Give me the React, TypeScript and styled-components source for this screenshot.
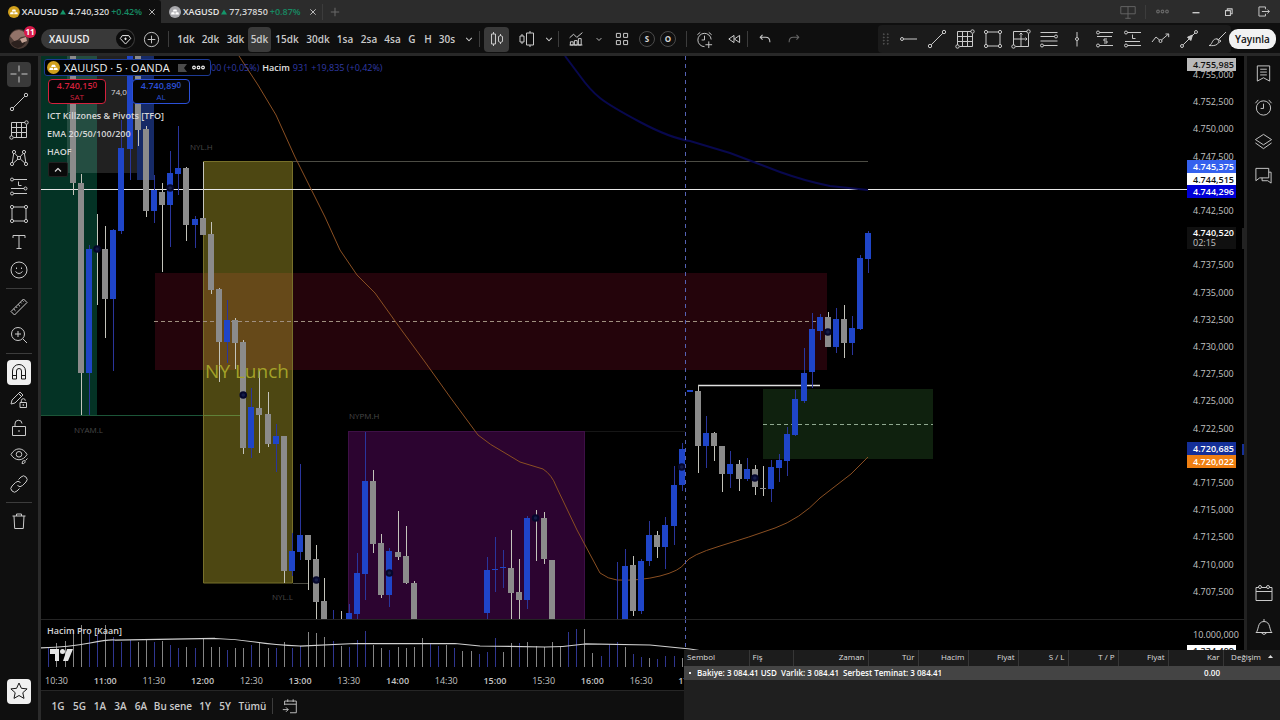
import React from "react";
import styled, { createGlobalStyle, css } from "styled-components";

const GlobalStyle = createGlobalStyle`
  * { box-sizing: border-box; }
  html, body { margin: 0; background: #000; }
  body { font-family: "Open Sans", "Noto Sans", sans-serif; color: #d6d6d6; font-size: 10px; overflow: hidden; }
  button { font: inherit; color: inherit; background: none; border: 0; padding: 0; margin: 0; cursor: pointer; }
`;

/* ---------- layout ---------- */

const Page = styled.div`
  position: relative;
  display: flex;
  flex-direction: column;
  height: 100vh;
  background: #0f0f0f;
`;

const TabBar = styled.header`
  display: flex;
  align-items: center;
  height: 23px;
  background: #2c2c2c;
`;

const Tab = styled.div<{ $active?: boolean }>`
  display: flex;
  align-items: center;
  gap: 2px;
  width: 161px;
  height: 100%;
  padding: 0 3px 0 8px;
  white-space: nowrap;
  background: ${(p) => (p.$active ? "#0f0f0f" : "transparent")};
  border-radius: 0 3px 0 0;
`;

const TabName = styled.span`
  font-size: 9px;
  font-weight: 600;
  color: #e4e4e4;
`;

const TabPrice = styled.span`
  font-size: 9px;
  font-weight: 600;
`;

const TabChange = styled.span`
  font-size: 9px;
  font-weight: 600;
  color: #178a63;
`;

const Spacer = styled.div<{ $w?: number }>`
  flex: ${(p) => (p.$w ? `0 0 ${p.$w}px` : "1")};
`;

const Rule = styled.span<{ $h?: number }>`
  flex: none;
  width: 1px;
  height: ${(p) => p.$h ?? 16}px;
  background: #3c3c3c;
`;

const Toolbar = styled.div`
  display: flex;
  align-items: center;
  height: 33px;
  border-bottom: 3px solid #282828;
  background: #0f0f0f;
  padding-top: 2px;
`;

const Slot = styled.button<{ $w?: number; $h?: number; $on?: boolean; $light?: boolean; $dim?: boolean }>`
  display: flex;
  flex: none;
  align-items: center;
  justify-content: center;
  width: ${(p) => p.$w ?? 28}px;
  height: ${(p) => p.$h ?? 25}px;
  border-radius: 4px;
  font-weight: 600;
  white-space: nowrap;
  color: ${(p) => (p.$light ? "#161616" : p.$dim ? "#686868" : "#cacaca")};
  ${(p) => p.$on && css`background: #3a3a3a;`}
  ${(p) => p.$light && css`background: #f0f0f0;`}
`;

const Account = styled.button`
  position: relative;
  display: flex;
  align-items: center;
  width: 41px;
  height: 24px;
  padding-left: 9px;
`;

const Badge = styled.span`
  position: absolute;
  left: 24px;
  top: -1px;
  width: 12px;
  height: 12px;
  border-radius: 6px;
  background: #d81b4a;
  color: #fff;
  font-size: 8px;
  line-height: 12px;
  font-weight: 700;
  text-align: center;
`;

const SymbolButton = styled.button`
  display: flex;
  align-items: center;
  justify-content: space-between;
  width: 94px;
  height: 20px;
  padding: 0 1px 0 8px;
  border-radius: 10px;
  background: #393939;
  font-weight: 600;
  color: #eee;
`;

const RoundIcon = styled.span`
  display: flex;
  align-items: center;
  justify-content: center;
  width: 18px;
  height: 18px;
  border-radius: 9px;
  background: #0c0c0c;
`;

const Letter = styled.button`
  width: 16px;
  height: 16px;
  margin-right: 5px;
  border: 1px solid #4a4a4a;
  border-radius: 8px;
  font-size: 8px;
  line-height: 12px;
  font-weight: 700;
`;

const Favorites = styled.div`
  display: flex;
  align-items: center;
  height: 28px;
  background: #1b1b1b;
  border-radius: 4px;
`;

const Publish = styled.button`
  width: 47px;
  height: 20px;
  margin: 0 4px 0 -2px;
  border-radius: 9px;
  background: #f2f2f2;
  color: #111;
  font-weight: 600;
`;

const Body = styled.div`
  display: flex;
  flex: 1;
  min-height: 0;
`;

const LeftRail = styled.nav`
  display: flex;
  flex: none;
  flex-direction: column;
  align-items: center;
  width: 41px;
  padding: 4px 0 15px;
  border-right: 3px solid #2b2b2b;
`;

const RailCell = styled.div`
  display: flex;
  flex: none;
  align-items: center;
  justify-content: center;
  height: 28px;
`;

const RailRule = styled.hr`
  flex: none;
  width: 26px;
  height: 1px;
  margin: 4px 0;
  border: 0;
  background: #3c3c3c;
`;

const RightRail = styled.nav`
  display: flex;
  flex: none;
  flex-direction: column;
  align-items: center;
  width: 36px;
  padding-bottom: 42px;
  border-left: 3px solid #222;
`;

const ChartColumn = styled.main`
  display: flex;
  flex: 1;
  flex-direction: column;
  min-width: 0;
  background: #000;
`;

const Pane = styled.section<{ $h?: number }>`
  position: relative;
  display: flex;
  min-height: 0;
  flex: ${(p) => (p.$h ? `0 0 ${p.$h}px` : "1")};
  overflow: hidden;
`;

const Plot = styled.svg`
  display: block;
  flex: 1;
  min-width: 0;
  height: 100%;
`;

const Scale = styled.svg`
  display: block;
  flex: none;
  width: 57px;
  height: 100%;
`;

const RangeBar = styled.footer`
  display: flex;
  flex: none;
  align-items: center;
  height: 30px;
  padding-left: 6px;
  border-top: 1px solid #262626;
  background: #0f0f0f;
`;

/* ---------- legend ---------- */

const Legend = styled.div`
  position: absolute;
  left: 3px;
  top: 3px;
  display: flex;
  flex-direction: column;
  align-items: flex-start;
`;

const LegendRow = styled.div`
  display: flex;
  align-items: center;
`;

const LegendTitle = styled.div`
  display: flex;
  align-items: center;
  gap: 4px;
  width: 167px;
  height: 17px;
  padding: 0 4px 0 2px;
  border: 1px solid #1d3a94;
  border-radius: 3px;
  background: #020202;
  font-size: 11px;
  line-height: 15px;
  font-weight: 500;
  color: #f0f0f0;
  white-space: nowrap;
`;

const TitleText = styled.span`
  flex: 1;
`;

const Values = styled.span<{ $strong?: boolean }>`
  margin-right: 3px;
  font-size: 9px;
  font-weight: ${(p) => (p.$strong ? 600 : 400)};
  color: ${(p) => (p.$strong ? "#e2e2e2" : "#303ba6")};
  white-space: nowrap;
`;

const Quotes = styled.div`
  display: flex;
  align-items: center;
  padding: 3px 0 0 4px;
`;

const QuoteButton = styled.button<{ $tone: string }>`
  display: flex;
  flex-direction: column;
  align-items: center;
  width: 58px;
  height: 25px;
  border: 1px solid ${(p) => p.$tone};
  border-radius: 4px;
  background: #050505;
  color: ${(p) => p.$tone};
  font-size: 8px;
  line-height: 10px;
`;

const QuotePrice = styled.span`
  font-size: 9px;
  line-height: 12px;
  font-weight: 600;
`;

const Small = styled.span`
  font-size: 8px;
  line-height: 8px;
  vertical-align: 1px;
`;

const Spread = styled.span`
  width: 26px;
  font-size: 8px;
  text-align: center;
  color: #ddd;
`;

const Indicators = styled.ul`
  list-style: none;
  margin: 3px 0 0;
  padding: 0 0 0 3px;
  font-size: 9px;
  font-weight: 600;
  line-height: 18px;
`;

const Collapse = styled.button`
  display: flex;
  align-items: center;
  justify-content: center;
  width: 20px;
  height: 15px;
  margin: 1px 0 0 4px;
  border: 1px solid #222;
  border-radius: 2px;
  background: #0a0a0a;
`;

const PaneTitle = styled.span`
  position: absolute;
  left: 6px;
  top: 6px;
  font-size: 9px;
  line-height: 12px;
  font-weight: 600;
`;

const Brand = styled.svg`
  position: absolute;
  left: 9px;
  top: 30px;
`;

/* ---------- terminal window over the chart ---------- */

const Terminal = styled.section`
  position: absolute;
  left: 684px;
  right: 0;
  bottom: 0;
  height: 70px;
  background: #1f1f1f;
`;

const TradeTable = styled.table`
  width: 100%;
  table-layout: fixed;
  border-collapse: collapse;
  font-size: 8px;
  white-space: nowrap;
  color: #dedede;
`;

const Head = styled.th<{ $left?: boolean }>`
  height: 16px;
  padding: 0 3px 2px;
  border-right: 1px solid #363636;
  background: #1c1c1c;
  font-weight: 400;
  line-height: 14px;
  text-align: ${(p) => (p.$left ? "left" : "right")};
  &:last-child { border-right: 0; padding-right: 7px; }
`;

const SortMark = styled.svg`
  margin: 0 0 2px 7px;
`;

const Cell = styled.td<{ $right?: boolean }>`
  height: 14px;
  padding: 0 3px 0 4px;
  background: #444;
  line-height: 14px;
  font-weight: 600;
  color: #fff;
  text-align: ${(p) => (p.$right ? "right" : "left")};
`;

const Figure = styled.span`
  margin-right: 4px;
`;

const Bullet = styled.span`
  display: inline-block;
  width: 2px;
  height: 2px;
  margin: 0 6px 2px 1px;
  background: #eee;
`;

/* ---------- icons ---------- */

type Mark = { d?: string; c?: [number, number, number][]; f?: string };

const Icon = ({ m, size = 20, w = 1 }: { m: Mark; size?: number; w?: number }) => (
  <svg width={size} height={size} viewBox="0 0 20 20" fill="none" stroke="currentColor" strokeWidth={w} strokeLinejoin="round" aria-hidden="true">
    {m.d && <path d={m.d} />}
    {m.f && <path d={m.f} fill="currentColor" />}
    {m.c?.map(([x, y, r], i) => <circle key={i} cx={x} cy={y} r={r} />)}
  </svg>
);

const I: Record<string, Mark> = {
  cross: { d: "M10 1.500v6M10 12.500v6M1.500 10h6M12.500 10h6" },
  trend: { d: "M4.200 15.800 15.800 4.200", c: [[3, 17, 1.700], [17, 3, 1.700]] },
  grid: { d: "M2.500 16V2.500H16M17.500 4.500v13H4.500M2.500 7.500h15M2.500 12.500h15M7.500 2.500v15M12.500 2.500v15", c: [[2.500, 17.500, 1.700], [17.500, 2.500, 1.700]] },
  pattern: { d: "M3.300 14.500 4.700 5.500M6 5.500l3 3.500M11 9l3-3.500M15.400 5.500l1.400 9M4.500 15l4.500-4M11.300 11l4.500 4", c: [[5, 4, 1.600], [15, 4, 1.600], [10, 10, 1.600], [3, 16, 1.600], [17, 16, 1.600]] },
  longPos: { d: "M4.500 3.500H18M9.500 5.500v4h3M2 12.500h13M4.500 17.500H18", c: [[3, 3.500, 1.500], [16.500, 12.500, 1.500], [3, 17.500, 1.500]] },
  shortFav: { d: "M4.500 3.500H18M2 7.500h15M12 10H9v2h3v2H9M4.500 16.500H18", c: [[3, 3.500, 1.500], [3, 16.500, 1.500]] },
  longFav: { d: "M4.500 3.500H18M9.500 5.500v4h3M2 12.500h15M4.500 16.500H18", c: [[3, 3.500, 1.500], [3, 16.500, 1.500]] },
  rect: { d: "M4.500 3h11M4.500 17h11M3 4.500v11M17 4.500v11", c: [[3, 3, 1.600], [17, 3, 1.600], [3, 17, 1.600], [17, 17, 1.600]] },
  text: { d: "M4 6V3.500h12V6M10 3.500v13M7.500 16.500h5" },
  smile: { d: "M6.500 11.500q3.500 4 7 0M7.500 7.500v1.500M12.500 7.500v1.500", c: [[10, 10, 8]] },
  ruler: { d: "M2 14.500 14.500 2 18 5.500 5.500 18ZM4.700 12l1.800 1.800M7 9.700l1.200 1.200M9.200 7.500 11 9.300M11.500 5.200l1.200 1.200M13.300 3.400l1.200 1.200" },
  zoom: { d: "M9 6v6M6 9h6M14 14l4 4", c: [[9, 9, 6.500]] },
  magnet: { d: "M3.500 17V9a6.500 6.500 0 0 1 13 0v8h-4V9a2.500 2.500 0 0 0-5 0v8ZM3.500 13.500h4M12.500 13.500h4" },
  penLock: { d: "M2 14 3 10 11 2l3 3-8 8ZM9.500 3.500l3 3M11 12.500h6.500v5H11ZM12.300 12.500v-1.800a2 2 0 0 1 4 0", c: [[14.300, 15, .5]] },
  lock: { d: "M3.500 8.500h13v9h-13ZM6 8.500V6a3.500 3.500 0 0 1 7-.5M10 12v2" },
  eye: { d: "M2 8.500c4-7.500 12-7.500 16 0-4 7-12 7-16 0ZM13 17.500q0-3 2.500-3 1.500 1.500 0 2.500-1 1-2.500.5ZM16.500 14.500 18.500 12.500", c: [[10, 8.300, 2.800]] },
  link: { d: "M8.500 11.500a3.500 3.500 0 0 0 5 0l3.500-3.500a3.500 3.500 0 0 0-5-5L9.500 5.500M11.500 8.500a3.500 3.500 0 0 0-5 0L3 12a3.500 3.500 0 0 0 5 5l2.500-2.500" },
  trash: { d: "M3.500 5h13M7.500 5V3h5v2M5 5l.7 12.500h8.600L15 5" },
  star: { d: "m10 2 2.400 5.300 5.700.6-4.300 3.800 1.200 5.700L10 14.500l-5 2.900 1.200-5.700L1.900 7.900l5.700-.6Z" },
  hline: { d: "M4.500 10H18", c: [[3, 10, 1.500]] },
  vline: { d: "M10 3v5.500M10 11.500v6", c: [[10, 10, 1.500]] },
  gridArrow: { d: "M2.500 16V2.500H16M17.500 4.500v13H4.500M10 4v13M3 10h13M8.500 5.500 10 4l1.500 1.500M14.500 8.500 16 10l-1.500 1.500", c: [[2.500, 17.500, 1.700], [17.500, 2.500, 1.700]] },
  lines: { d: "M1.500 3.500h17M1.500 7.500h14M1.500 12h17M4.500 16.500h14", c: [[17, 7.500, 1.500], [3, 16.500, 1.500]] },
  zigzag: { d: "M1 13l4-5 3.500 3M10.500 11l7-6M14.500 5h3.200v3.200", c: [[9.500, 12, 1.500]] },
  arrow: { d: "M4.200 15.800 10 10M13 7l3-3", f: "M13.500 6 11.800 11.500 8.500 8.200Z", c: [[3, 17, 1.500], [17, 3, 1.500]] },
  brush: { d: "M2 16.500c3 0 3-6 6.500-6.500 3-.3 4 3 2 5-2 1.800-5 1.800-8.500 1.500ZM9.500 9.500 14 12l-2 1.500M12 10l7-7" },
  candles: { d: "M6.500 3v2M6.500 15v2M13.500 5v2M13.500 13v2M4.500 5h4v10h-4ZM11.500 7.500l2-1 2 1v5l-2 1-2-1Z" },
  bars: { d: "M5 5v2M5 13v2M3 7h4v6H3ZM13 2v2M13 16v2M9.500 4h7v12h-7Z" },
  indicator: { d: "M2 8.500 7 4l4 4 7-6M3 17.500v-4h3.500v4ZM8 17.500V12h3.500v5.500ZM13 17.500V9.500h3.500v8ZM2 17.500h16" },
  four: { d: "M3 3h5v5H3ZM12 3h5v5h-5ZM3 12h5v5H3ZM12 12h5v5h-5Z" },
  alarmPlus: { d: "M10 6v4.500H7M17 10A7 7 0 1 0 10 17.500M2.500 5 5.500 2.500M14.500 2.500l3 2.500M14.500 12v7M11 15.500h7" },
  rewind: { d: "M10 5.500v9L3.500 10ZM17 5.500v9L10.500 10Z" },
  undo: { d: "M6.500 4 3 7.500 6.500 11M3 7.500h8q6 0 6 7" },
  redo: { d: "M13.500 4 17 7.500 13.500 11M17 7.500H9q-6 0-6 7" },
  chevron: { d: "m6 8.500 4 4 4-4" },
  up: { d: "m5 12.500 5-5 5 5" },
  plusCircle: { d: "M10 6v8M6 10h8", c: [[10, 10, 7.500]] },
  gem: { d: "M5 4h10l3 4.500-8 8.500-8-8.500ZM10 7v4M8 9h4" },
  list: { d: "M3.500 2h13v16L10 14.500 3.500 18ZM6.500 5.500h7M6.500 8.500h7M6.500 11.500h7" },
  alarm: { d: "M10 6v5H7M1.500 5.500l3-3.500M15.500 2l3 3.500", c: [[10, 10.500, 7.500]] },
  layers: { d: "M1.500 8 10 2.500 18.500 8 10 13.500ZM1.500 11.500 10 17.500l8.500-6" },
  chat: { d: "M2 2.500h13.500v10H6L2 15.500ZM15.500 6.500h2.500V18l-3.500-2.500H8.500v-3" },
  calendar: { d: "M2 4.500h2.500M7.500 4.500h5M15.500 4.500H18V17.500H2V4.500M2 8.500h16", c: [[6, 4, 1.500], [14, 4, 1.500]] },
  bell: { d: "M2 15.500c3-2 1-11 8-11s5 9 8 11ZM10 4.500V2M7.500 16q2.500 3 5 0" },
  goto: { d: "M4 9V4.500h13v13H10M4 8h13M7.500 2.500v3M13.500 2.500v3M2 14h6M5.500 11.500 8 14l-2.500 2.500" },
  close: { d: "m5.500 5.500 9 9M14.500 5.500l-9 9" },
  plus: { d: "M10 4v12M4 10h12" },
  monitor: { d: "M2 4h16v8H2ZM10 4v13M7 17h6" },
  dots: { c: [[4, 10, 1.800], [10, 10, 1.800], [16, 10, 1.800]] },
  minus: { d: "M5 11h10" },
  restore: { d: "M5 8h7v7H5ZM7.500 8V5.500h7v7H12" },
  exit: { d: "M13 6.500V3H3v14h10v-3.500M7.500 10H19M16 7l3 3-3 3" },
  grip: { c: [[6, 4, .6], [11, 4, .6], [6, 8, .6], [11, 8, .6], [6, 12, .6], [11, 12, .6], [6, 16, .6], [11, 16, .6]] },
};

const Coin = ({ color, size = 12 }: { color: string; size?: number }) => (
  <svg width={size} height={size} viewBox="0 0 12 12" aria-hidden="true">
    <circle cx="6" cy="6" r="6" fill={color} />
    <path d="M4.600 3.500h2.800l.8 2H3.800ZM2.600 6.200h2.800l.5 2.200H2ZM6.600 6.200h2.800l.6 2.200H6.200Z" fill="#fff" />
  </svg>
);

const Rise = () => (
  <svg width="6" height="6" viewBox="0 0 7 6" aria-hidden="true"><path d="M3.500 0 7 6H0Z" fill="#14976b" /></svg>
);

/* ---------- chart data ---------- */

const FIRST = 105.2;
const STEP = 8.12;
const xAt = (k: number) => FIRST + STEP * k;

// slot, high, body top, body bottom, low, direction
type Candle = [number, number, number, number, number, 0 | 1];
const candles: Candle[] = [
  [-4, 50, 50, 183, 195, 0], [-3, 174, 183, 373, 415, 0], [-2, 245, 249, 373, 415, 1], [-1, 214, 249, 250, 305, 0],
  [0, 226, 249, 299, 338, 0], [1, 229, 230, 299, 371, 1], [2, 120, 148, 231, 234, 1], [3, 50, 50, 149, 180, 1],
  [4, 50, 50, 130, 146, 0], [5, 126, 129, 211, 217, 0], [6, 175, 190, 211, 223, 1], [7, 183, 192, 205, 272, 0],
  [8, 151, 173, 205, 247, 1], [9, 126, 168, 174, 195, 1], [10, 167, 168, 225, 241, 0], [11, 216, 219, 225, 248, 1],
  [12, 162, 218, 235, 235, 0], [13, 222, 234, 290, 294, 0], [14, 288, 289, 342, 382, 0], [15, 300, 320, 342, 363, 1],
  [16, 318, 320, 343, 369, 0], [17, 340, 342, 448, 454, 0], [18, 388, 407, 448, 458, 1], [19, 371, 408, 415, 453, 0],
  [20, 392, 414, 444, 447, 0], [21, 424, 436, 444, 472, 1], [22, 436, 436, 571, 583, 0], [23, 533, 551, 571, 576, 1],
  [24, 464, 535, 552, 560, 1], [25, 535, 535, 560, 590, 0], [26, 545, 559, 602, 619, 0], [27, 578, 601, 619, 619, 0],
  [28, 610, 619, 619, 619, 1], [29, 611, 619, 619, 619, 0], [30, 604, 613, 619, 619, 1], [31, 553, 573, 614, 619, 1],
  [32, 432, 481, 574, 600, 1], [33, 470, 481, 544, 553, 0], [34, 534, 543, 595, 598, 0], [35, 548, 551, 595, 607, 1],
  [36, 511, 552, 557, 560, 0], [37, 526, 556, 583, 584, 0], [38, 581, 583, 619, 619, 0],
  [47, 557, 570, 613, 619, 1], [48, 537, 569, 570, 592, 1], [49, 550, 567, 568, 588, 1], [50, 530, 568, 593, 619, 0],
  [51, 559, 592, 600, 619, 0], [52, 516, 518, 600, 609, 1], [53, 510, 518, 519, 561, 0], [54, 512, 518, 559, 564, 0],
  [55, 560, 560, 619, 619, 0], [63, 562, 619, 619, 619, 1], [64, 549, 566, 619, 619, 1], [65, 556, 565, 611, 616, 0],
  [66, 559, 561, 611, 614, 1], [67, 521, 535, 561, 566, 1], [68, 531, 535, 547, 558, 0], [69, 517, 525, 547, 569, 1],
  [70, 466, 485, 526, 545, 1], [71, 443, 449, 485, 491, 1], [72, 390, 390, 392, 392, 1], [73, 385, 391, 446, 473, 0],
  [74, 416, 433, 446, 468, 1], [75, 432, 433, 446, 461, 0], [76, 446, 446, 474, 492, 0], [77, 451, 464, 474, 488, 1],
  [78, 460, 464, 479, 491, 0], [79, 458, 469, 479, 481, 1], [80, 465, 469, 487, 495, 0], [81, 466, 488, 489, 496, 0],
  [82, 460, 467, 489, 502, 1], [83, 454, 460, 468, 482, 1], [84, 427, 434, 461, 476, 1], [85, 390, 399, 435, 436, 1],
  [86, 348, 373, 401, 403, 1], [87, 313, 329, 372, 388, 1], [88, 314, 317, 331, 340, 1], [89, 312, 317, 347, 347, 0],
  [90, 308, 319, 347, 353, 1], [91, 305, 319, 343, 358, 0], [92, 316, 328, 343, 355, 1], [93, 255, 258, 329, 330, 1],
  [94, 231, 233, 259, 273, 1],
];

const markers: [number, number][] = [[-1, 249], [8, 188], [17, 395], [26, 580], [35, 573], [53, 518], [71, 467], [80, 478], [89, 332]];

const volumeTops = [
  648, 643, 641, 630, 625, 633, 633, 625, 637, 642, 640, 642, 639, 642, 641, 645, 648, 647, 648, 639, 647, 647, 650, 648, 648, 645, 642, 648, 648, 642,
  648, 646, 632, 633, 637, 641, 646, 647, 640, 631, 645, 648, 650, 647, 648, 647, 638, 644, 646, 645, 648, 651, 651, 654, 652, 638, 652, 643, 643, 642,
  646, 647, 642, 646, 632, 629, 629, 653, 656, 644, 642, 647, 654, 657, 658, 659, 656, 656, 658,
];
const volumeSides = "bgggg" + "bbgbbbggbgbbgbggg" + "bggbggbgbbgggb" + "gbbbggbggggbbgbggbb" + "bggbgggggbbggbbbgbbgbbb";

const ticks = ["755,000", "752,500", "750,000", "747,500", "", "742,500", "", "737,500", "735,000", "732,500", "730,000", "727,500", "725,000", "722,500", "", "717,500", "715,000", "712,500", "710,000", "707,500"];

type Tag = [string, number, string, string];
const tags: Tag[] = [
  ["4.755,985", 58, "#b9b9b9", "#111"],
  ["4.745,375", 160, "#3461ee", "#fff"],
  ["4.744,515", 173, "#fff", "#111"],
  ["4.744,296", 185, "#0000d8", "#fff"],
  ["4.720,685", 442, "#142f99", "#fff"],
  ["4.720,022", 455, "#ef7f12", "#fff"],
];

const hours = ["10:30", "11:00", "11:30", "12:00", "12:30", "13:00", "13:30", "14:00", "14:30", "15:00", "15:30", "16:00", "16:30", "17:00"];

const PricePlot = () => (
  <Plot role="img" aria-label="XAUUSD 5dk">
    <g transform="translate(-41 -56)">
      <rect x="41" y="56" width="56" height="359" fill="#043325" />
      <rect x="67" y="56" width="70" height="117" fill="#fff" fillOpacity=".13" />
      <rect x="137" y="56" width="17" height="124" fill="#162a66" />
      <path d="M41 415.500H243" stroke="#1c5538" />
      <rect x="155" y="273" width="672" height="97" fill="#24040b" />
      <rect x="203" y="162" width="90" height="421" fill="#ffeb3b" fillOpacity=".3" />
      <path d="M203.500 583V161.500H292.500V583Z" fill="none" stroke="#77702a" />
      <path d="M293 161.500H868M293 583.500H308" stroke="#4c4c44" />
      <rect x="348.500" y="431.500" width="236" height="190" fill="#2c0430" stroke="#3e1046" />
      <path d="M585 431.500H685" stroke="#161616" />
      <rect x="763" y="389" width="170" height="70" fill="#0f210e" />
      <path d="M154 321.500H827" stroke="#a09080" strokeDasharray="4 3" />
      <path d="M763 424.500H933" stroke="#8fa88f" strokeDasharray="4 3" />
      <path d="M41 189.500H3000" stroke="#e8e8e8" />
      <path d="M565 56 580 76Q590 90 600 98T640 122 690 141L730 153 780 172Q805 181 830 186L868 190" fill="none" stroke="#08084e" strokeWidth="2" />
      <path d="M239 56 258 85 276 115 295 157 325 217 340 250 357 275 375 293 400 328 425 362 450 397 478 435Q490 445 505 453L520 462 543 469Q552 475 556 486L577 530 600 573Q608 579 617 580 640 581 660 576T685 563 720 546 775 528 820 498L851 474 868 457" fill="none" stroke="#8a4f22" />
      <path d="M698 385.500H820" stroke="#e0e0e0" strokeWidth="1.500" />
      {candles.map(([k, hi, top, bottom, low, up]) => {
        const x = Math.round(xAt(k));
        return (
          <g key={k}>
            <rect x={x} y={hi} width="1" height={low - hi} fill={up ? "#2a359c" : "#c4c4bb"} />
            <rect x={x - 3} y={top} width="6" height={bottom - top} fill={up ? "#1f45c8" : "#8b8b8b"} />
          </g>
        );
      })}
      {markers.map(([k, y]) => (
        <circle key={k} cx={xAt(k)} cy={y} r="2.800" fill="#141c48" stroke="#05072c" strokeWidth="2" />
      ))}
      <path d="M685.500 56V620" stroke="#5562b4" strokeDasharray="4 4" />
      <g fontSize="8" fill="#484848">
        <text x="190" y="150">NYL.H</text>
        <text x="74" y="433">NYAM.L</text>
        <text x="349" y="419">NYPM.H</text>
        <text x="272" y="600">NYL.L</text>
      </g>
      <text x="247" y="378" fontSize="19" textAnchor="middle" fill="#a3a128">NY Lunch</text>
    </g>
  </Plot>
);

const PriceScale = () => (
  <Scale aria-hidden="true">
    <g transform="translate(0 -56)" fontSize="9" fill="#c4c4c4">
      {ticks.map((t, n) => t && <text key={t} x="6" y={Math.round(78 + 27.2 * n)}>4.{t}</text>)}
      {tags.map(([t, y, bg, fg]) => (
        <g key={t} fontWeight="600">
          <rect x="0" y={y} width="49" height="13" fill={bg} />
          <text x="6" y={y + 10} fill={fg}>{t}</text>
        </g>
      ))}
      <rect x="0" y="227" width="49" height="22" fill="#101010" />
      <text x="6" y="236" fill="#fff" fontWeight="600">4.740,520</text>
      <text x="6" y="246">02:15</text>
      <rect x="55" y="228" width="2" height="21" fill="#222" />
      <rect x="55" y="444" width="2" height="11" fill="#142f99" />
    </g>
  </Scale>
);

const VolumePlot = () => (
  <Plot role="img" aria-label="Hacim">
    <g transform="translate(-41 -619)">
      {volumeTops.map((y, i) => (
        <rect key={i} x={Math.round(xAt(i - 7))} y={y} width="1" height={667 - y} fill={volumeSides[i] === "b" ? "#2f3690" : "#858585"} />
      ))}
      <path d="M41 648Q70 647 90 643T115 640L215 638.500Q235 639 255 642T300 646L355 643.500H455L480 646 545 647Q565 647 585 644L650 645 690 649 715 653" fill="none" stroke="#d0d0d0" strokeWidth="1.250" />
      <path d="M685.500 619V667" stroke="#5562b4" strokeDasharray="4 4" />
      <path d="M41 619.500H3000" stroke="#242424" />
    </g>
  </Plot>
);

/* ---------- sections ---------- */

const intervals: [string, number][] = [["1dk", 24], ["2dk", 25], ["3dk", 25], ["5dk", 23], ["15dk", 32], ["30dk", 30], ["1sa", 24], ["2sa", 24], ["4sa", 23], ["G", 16], ["H", 16], ["30s", 22]];
const favorites = ["hline", "trend", "grid", "rect", "gridArrow", "lines", "vline", "shortFav", "longFav", "zigzag", "arrow", "brush"];
const ranges: [string, number][] = [["1G", 22], ["5G", 21], ["1A", 20], ["3A", 21], ["6A", 20], ["Bu sene", 44], ["1Y", 20], ["5Y", 20], ["Tümü", 35]];
const columns: [string, number][] = [["Sembol", 65], ["Fiş", 44], ["Zaman", 75], ["Tür", 50], ["Hacim", 50], ["Fiyat", 50], ["S / L", 50], ["T / P", 50], ["Fiyat", 50], ["Kar", 55], ["Değişim", 57]];

const RailButton = ({ name, on, light }: { name: string; on?: boolean; light?: boolean }) => (
  <RailCell>
    <Slot $w={24} $h={25} $on={on} $light={light} aria-label={name}><Icon m={I[name]} /></Slot>
  </RailCell>
);

const App = () => (
  <Page>
    <GlobalStyle />
    <TabBar>
      <Tab $active>
        <Coin color="#d1a01c" />
        <TabName>XAUUSD</TabName>
        <Rise />
        <TabPrice>4.740,320</TabPrice>
        <TabChange>+0.42%</TabChange>
        <Spacer />
        <Slot $w={12} $h={12} aria-label="Kapat"><Icon m={I.close} size={14} w={1.5} /></Slot>
      </Tab>
      <Tab>
        <Coin color="#a8a8ac" />
        <TabName>XAGUSD</TabName>
        <Rise />
        <TabPrice>77,37850</TabPrice>
        <TabChange>+0.87%</TabChange>
        <Spacer />
        <Slot $w={12} $h={12} aria-label="Kapat"><Icon m={I.close} size={14} w={1.5} /></Slot>
      </Tab>
      <Rule />
      <Slot $w={24} $h={20} $dim aria-label="Yeni sekme"><Icon m={I.plus} size={14} w={1.5} /></Slot>
      <Spacer />
      <Slot $w={34} $h={20} $dim aria-label="Düzen"><Icon m={I.monitor} size={18} /></Slot>
      <Rule $h={14} />
      <Slot $w={33} $h={20} $dim aria-label="Diğer"><Icon m={I.dots} size={15} w={1.5} /></Slot>
      <Slot $w={33} $h={20} aria-label="Küçült"><Icon m={I.minus} size={14} w={2} /></Slot>
      <Slot $w={34} $h={20} aria-label="Geri yükle"><Icon m={I.restore} size={14} w={1.5} /></Slot>
      <Slot $w={34} $h={20} aria-label="Çıkış"><Icon m={I.exit} size={13} w={1.5} /></Slot>
    </TabBar>

    <Toolbar>
      <Account aria-label="Hesap">
        <svg width="20" height="20" viewBox="0 0 20 20" aria-hidden="true">
          <circle cx="10" cy="10" r="10" fill="#4c3c36" />
          <path d="M1 7q3-6 9-6 6 1 8 6l-6 1-6 5Z" fill="#927369" />
          <path d="M2 14q5-4 9-2l6-2q-1 8-8 9-5-1-7-5Z" fill="#2c211e" />
          <path d="M11 10l6-2 1 4-5 2Z" fill="#c2a294" />
        </svg>
        <Badge>11</Badge>
      </Account>
      <SymbolButton>
        XAUUSD
        <RoundIcon><Icon m={I.gem} size={13} w={1.5} /></RoundIcon>
      </SymbolButton>
      <Slot $w={33} aria-label="Sembol ekle"><Icon m={I.plusCircle} size={19} /></Slot>
      <Rule />
      <Spacer $w={5} />
      {intervals.map(([t, w]) => <Slot key={t} $w={w} $on={t === "5dk"}>{t}</Slot>)}
      <Slot $w={21} aria-label="Aralıklar"><Icon m={I.chevron} size={14} w={1.5} /></Slot>
      <Rule />
      <Slot $w={33} aria-label="Mumlar"><Slot as="span" $w={25} $on><Icon m={I.candles} /></Slot></Slot>
      <Slot $w={27} aria-label="Çubuklar"><Icon m={I.bars} /></Slot>
      <Slot $w={18} aria-label="Grafik türü"><Icon m={I.chevron} size={14} w={1.5} /></Slot>
      <Rule />
      <Slot $w={34} aria-label="Göstergeler"><Icon m={I.indicator} size={16} w={1.25} /></Slot>
      <Slot $w={12} aria-label="Favoriler"><Icon m={I.chevron} size={14} w={1.5} /></Slot>
      <Slot $w={34} aria-label="Şablonlar"><Icon m={I.four} size={16} w={1.25} /></Slot>
      <Letter>S</Letter>
      <Letter>O</Letter>
      <Spacer $w={5} />
      <Rule />
      <Slot $w={34} aria-label="Alarm"><Icon m={I.alarmPlus} size={19} /></Slot>
      <Slot $w={26} aria-label="Tekrar"><Icon m={I.rewind} size={16} w={1.25} /></Slot>
      <Rule />
      <Slot $w={34} aria-label="Geri al"><Icon m={I.undo} size={14} w={1.5} /></Slot>
      <Slot $w={24} $dim aria-label="Yinele"><Icon m={I.redo} size={14} w={1.5} /></Slot>
      <Spacer />
      <Favorites>
        <Slot $w={17} $dim aria-label="Taşı"><Icon m={I.grip} size={16} /></Slot>
        {favorites.map((n) => <Slot key={n} aria-label={n}><Icon m={I[n]} /></Slot>)}
      </Favorites>
      <Publish>Yayınla</Publish>
    </Toolbar>

    <Body>
      <LeftRail>
        <RailButton name="cross" on />
        {["trend", "grid", "pattern", "longPos", "rect", "text", "smile"].map((n) => <RailButton key={n} name={n} />)}
        <RailRule />
        <RailButton name="ruler" />
        <RailButton name="zoom" />
        <RailRule />
        <RailButton name="magnet" light />
        {["penLock", "lock", "eye", "link"].map((n) => <RailButton key={n} name={n} />)}
        <RailRule />
        <RailButton name="trash" />
        <Spacer />
        <RailButton name="star" light />
      </LeftRail>

      <ChartColumn>
        <Pane>
          <PricePlot />
          <PriceScale />
          <Legend>
            <LegendRow>
              <LegendTitle>
                <Coin color="#d1a01c" size={13} />
                <TitleText>XAUUSD · 5 · OANDA</TitleText>
                <svg width="9" height="8" viewBox="0 0 9 8" aria-hidden="true"><path d="M0 0h9L6 4l3 4H0Z" fill="#4b4b4b" /></svg>
                <Icon m={I.dots} size={15} w={1.500} />
              </LegendTitle>
              <Values>00 (+0,05%)</Values>
              <Values $strong>Hacim</Values>
              <Values>931</Values>
              <Values>+19,835 (+0,42%)</Values>
            </LegendRow>
            <Quotes>
              <QuoteButton $tone="#d4213d"><QuotePrice>4.740,15<Small>0</Small></QuotePrice>SAT</QuoteButton>
              <Spread>74,0</Spread>
              <QuoteButton $tone="#2b50d8"><QuotePrice>4.740,89<Small>0</Small></QuotePrice>AL</QuoteButton>
            </Quotes>
            <Indicators>
              <li>ICT Killzones &amp; Pivots [TFO]</li>
              <li>EMA 20/50/100/200</li>
              <li>HAOF</li>
            </Indicators>
            <Collapse aria-label="Daralt"><Icon m={I.up} size={12} w={2} /></Collapse>
          </Legend>
        </Pane>
        <Pane $h={48}>
          <VolumePlot />
          <Scale aria-hidden="true">
            <path d="M0 .5H57" stroke="#242424" />
            <text x="6" y="19" fontSize="9" fill="#c4c4c4">10.000,000</text>
            <rect x="0" y="26" width="49" height="13" fill="#fff" />
            <text x="6" y="35" fontSize="9" fontWeight="600" fill="#111">1.334,499</text>
          </Scale>
          <PaneTitle>Hacim Pro [Kaan]</PaneTitle>
          <Brand width="23" height="12" viewBox="0 0 23 12" aria-hidden="true">
            <path d="M0 0h9v12H5V5H0ZM17 0h6l-5 12h-5Z" fill="#e6e6e6" />
            <circle cx="12.500" cy="2.500" r="2.500" fill="#e6e6e6" />
          </Brand>
        </Pane>
        <Pane $h={23}>
          <Plot aria-label="Zaman">
            {hours.map((h, i) => (
              <text key={h} x={xAt(i * 6 - 6) - 41} y="17" textAnchor="middle" fontSize="9" fontWeight={h.endsWith("00") ? 600 : 400} fill="#c4c4c4">{h}</text>
            ))}
          </Plot>
        </Pane>
        <RangeBar>
          {ranges.map(([t, w]) => <Slot key={t} $w={w}>{t}</Slot>)}
          <Spacer $w={2} />
          <Rule />
          <Slot $w={33} aria-label="Tarihe git"><Icon m={I.goto} size={18} /></Slot>
        </RangeBar>
      </ChartColumn>

      <RightRail>
        {["list", "alarm", "layers", "chat"].map((n) => <Slot key={n} $h={34} aria-label={n}><Icon m={I[n]} size={19} /></Slot>)}
        <Spacer />
        {["calendar", "bell"].map((n) => <Slot key={n} $h={34} aria-label={n}><Icon m={I[n]} size={20} /></Slot>)}
        <Slot $h={34} aria-label="Yardım">
          <svg width="20" height="20" viewBox="0 0 20 20" aria-hidden="true"><circle cx="10" cy="7" r="9" fill="#f0f0f0" /></svg>
        </Slot>
      </RightRail>
    </Body>

    <Terminal>
      <TradeTable>
        <colgroup>{columns.map(([, w], i) => <col key={i} width={w} />)}</colgroup>
        <thead>
          <tr>
            {columns.map(([t], i) => (
              <Head key={i} $left={i < 2}>
                {t}
                {t === "Değişim" && <SortMark width="5" height="3" viewBox="0 0 5 3" aria-hidden="true"><path d="M0 3 2.500 0 5 3Z" fill="#ddd" /></SortMark>}
              </Head>
            ))}
          </tr>
        </thead>
        <tbody>
          <tr>
            <Cell colSpan={9}>
              <Bullet />
              <Figure>Bakiye: 3 084.41 USD</Figure>
              <Figure>Varlık: 3 084.41</Figure>
              <Figure>Serbest Teminat: 3 084.41</Figure>
            </Cell>
            <Cell $right>0.00</Cell>
            <Cell />
          </tr>
        </tbody>
      </TradeTable>
    </Terminal>
  </Page>
);

export default App;
